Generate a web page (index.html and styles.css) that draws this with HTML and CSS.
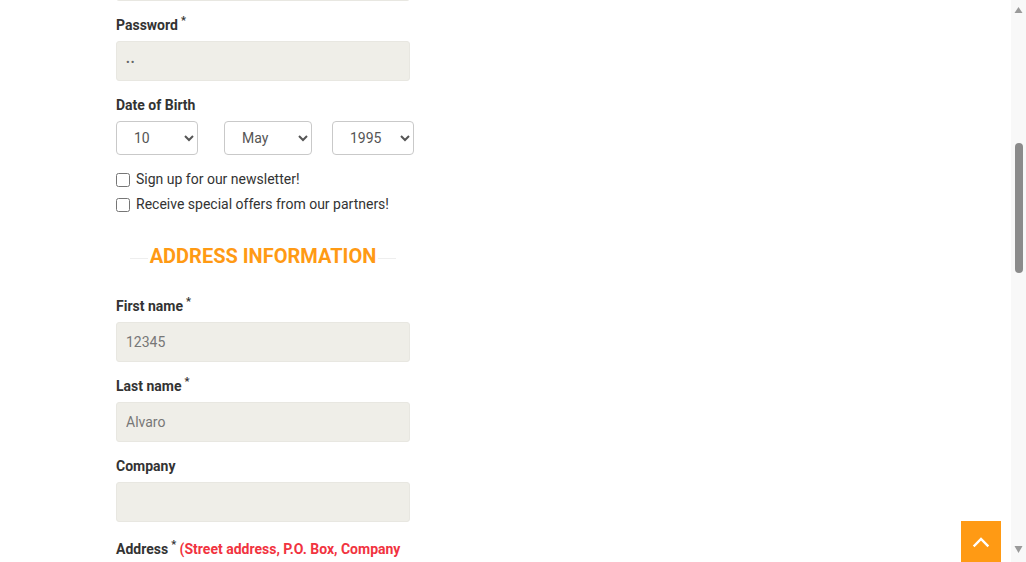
FILE: index.html
```html
<!DOCTYPE html>
<html lang="en">
<head>
<meta charset="utf-8">
<title>Create an account</title>
<link rel="stylesheet" href="styles.css">
</head>
<body>
<main class="page">
  <form class="account-form">
    <h1 class="page-title">Create an account</h1>
    <h2 class="section-title"><span>Your personal information</span></h2>
    <div class="field">
      <label class="field-label">Social title</label>
      <div class="radio-row">
        <label class="radio"><input type="radio" name="gender"> Mr.</label>
        <label class="radio"><input type="radio" name="gender"> Mrs.</label>
      </div>
    </div>
    <div class="field">
      <label class="field-label">First name<sup>*</sup></label>
      <input class="text-input" type="text" value="12345">
    </div>
    <div class="field">
      <label class="field-label">Last name<sup>*</sup></label>
      <input class="text-input" type="text" value="Alvaro">
    </div>
    <div class="field">
      <label class="field-label">Email<sup>*</sup></label>
      <input class="text-input" type="email" value="alvaro@example.com">
    </div>
    <div class="field" id="password-field">
      <label class="field-label">Password<sup>*</sup></label>
      <input class="text-input password" type="password" value="ab">
    </div>
    <div class="field dob-field">
      <label class="field-label">Date of Birth</label>
      <div class="dob-row">
        <select class="dob dob-day"><option>10</option></select>
        <select class="dob dob-month"><option>May</option></select>
        <select class="dob dob-year"><option>1995</option></select>
      </div>
    </div>
    <div class="checks">
      <label class="check"><input type="checkbox"> Sign up for our newsletter!</label>
      <label class="check"><input type="checkbox"> Receive special offers from our partners!</label>
    </div>
    <h2 class="section-title"><span>Address information</span></h2>
    <div class="field">
      <label class="field-label">First name<sup>*</sup></label>
      <input class="text-input" type="text" value="12345">
    </div>
    <div class="field">
      <label class="field-label">Last name<sup>*</sup></label>
      <input class="text-input" type="text" value="Alvaro">
    </div>
    <div class="field">
      <label class="field-label">Company</label>
      <input class="text-input" type="text" value="">
    </div>
    <div class="field field-address">
      <label class="field-label">Address<sup>*</sup> <span class="hint">(Street address, P.O. Box, Company name, etc.)</span></label>
      <input class="text-input" type="text" value="">
    </div>
    <div class="field">
      <label class="field-label">Address (Line 2)</label>
      <input class="text-input" type="text" value="">
    </div>
    <div class="field">
      <label class="field-label">City<sup>*</sup></label>
      <input class="text-input" type="text" value="">
    </div>
    <div class="field">
      <label class="field-label">Zip/Postal Code<sup>*</sup></label>
      <input class="text-input" type="text" value="">
    </div>
    <div class="field">
      <label class="field-label">Country<sup>*</sup></label>
      <input class="text-input" type="text" value="United States">
    </div>
    <div class="field">
      <label class="field-label">Home phone</label>
      <input class="text-input" type="text" value="">
    </div>
    <div class="field">
      <label class="field-label">Mobile phone<sup>*</sup></label>
      <input class="text-input" type="text" value="">
    </div>
    <button class="register" type="button">Register</button>
  </form>
</main>
<a class="back-top" href="#top" aria-label="Back to top">
  <svg width="18" height="18" viewBox="0 0 18 18"><path d="M2.5 12.5 L9 6 L15.5 12.5" fill="none" stroke="#fff" stroke-width="2.4" stroke-linecap="square"/></svg>
</a>
<div class="scrollbar" aria-hidden="true">
  <div class="sb-arrow sb-up"><svg width="15" height="15" viewBox="0 0 15 15"><path d="M3.5 13 L7.5 7 L11.5 13 Z" fill="#9a9a9a"/></svg></div>
  <div class="sb-track"><div class="sb-thumb"></div></div>
  <div class="sb-arrow sb-down"><svg width="15" height="20" viewBox="0 0 15 20"><path d="M3.5 4 L7.5 11 L11.5 4 Z" fill="#9a9a9a"/></svg></div>
</div>
<script src="scroll.js"></script>
</body>
</html>
```

FILE: scroll.js
```js
(function () {
  function place() {
    var f = document.getElementById('password-field');
    var top = f.getBoundingClientRect().top + window.pageYOffset;
    window.scrollTo(0, top - 15);
  }
  place();
  window.addEventListener('load', place);
})();
```

FILE: styles.css
```css
html, body {
  margin: 0;
  padding: 0;
  background: #fff;
}
body {
  font-family: Roboto, "Liberation Sans", Arial, sans-serif;
  font-size: 14px;
  color: #333;
}
.page {
  box-sizing: border-box;
  min-height: 2300px;
  padding: 156px 15px 0 116px;
}
.account-form {
  width: 294px;
}
.page-title {
  margin: 0 0 30px;
  font-size: 24px;
  line-height: 30px;
  font-weight: 700;
  text-transform: uppercase;
  color: #333;
}
.section-title {
  display: flex;
  align-items: center;
  gap: 2px;
  margin: 0 14px 28px;
  font-size: 20px;
  line-height: 24px;
  font-weight: 700;
  color: #ff9a14;
  text-transform: uppercase;
  white-space: nowrap;
}
.section-title::before,
.section-title::after {
  content: "";
  flex: 1;
  height: 1px;
  margin-top: 4px;
  background: #eeeeee;
}
.field {
  margin-bottom: 14px;
}
.field-address {
  padding-top: 3px;
}
.field-label {
  display: block;
  margin-bottom: 6px;
  line-height: 20px;
  font-weight: 700;
  color: #333;
}
.field-label sup {
  font-size: 11px;
  margin-left: 3px;
  vertical-align: 6px;
  line-height: 0;
}
.hint {
  color: #f13340;
}
.text-input {
  box-sizing: border-box;
  display: block;
  width: 294px;
  height: 40px;
  margin: 0;
  padding: 0 9px;
  border: 1px solid #e8e7e1;
  border-radius: 3px;
  background: #efeee8;
  font-family: Roboto, "Liberation Sans", Arial, sans-serif;
  font-size: 14px;
  color: #777;
  outline: none;
}
.text-input.password {
  font-size: 11px;
  letter-spacing: 1px;
  padding-top: 2px;
  color: #666;
}
.radio-row {
  display: flex;
  gap: 20px;
  height: 20px;
  align-items: center;
}
.radio {
  display: flex;
  align-items: center;
  gap: 4px;
}
.radio input { margin: 0; }
.dob-field {
  margin-bottom: 11px;
}
.dob-row {
  display: flex;
}
.dob {
  flex: none;
  box-sizing: border-box;
  height: 34px;
  margin: 0;
  padding: 0 4px 0 13px;
  border: 1px solid #c9c9c9;
  border-radius: 4px;
  background: #fff;
  font-family: Roboto, "Liberation Sans", Arial, sans-serif;
  font-size: 14px;
  color: #555;
}
.dob-day { width: 82px; margin-right: 26px; }
.dob-month { width: 88px; margin-right: 20px; }
.dob-year { width: 82px; }
.checks {
  margin-bottom: 28px;
}
.check {
  display: flex;
  align-items: center;
  gap: 6px;
  height: 25px;
  color: #333;
  white-space: nowrap;
}
.check input {
  width: 14px;
  height: 14px;
  margin: 2px 0 0;
}
.register {
  margin-top: 10px;
  height: 40px;
  padding: 0 24px;
  border: 0;
  border-radius: 3px;
  background: #ff9a14;
  color: #fff;
  font-family: Roboto, "Liberation Sans", Arial, sans-serif;
  font-size: 14px;
  font-weight: 700;
  text-transform: uppercase;
}
.back-top {
  position: fixed;
  right: 25px;
  bottom: 0;
  width: 40px;
  height: 41px;
  display: flex;
  align-items: center;
  justify-content: center;
  background: #ff9a14;
}
.scrollbar {
  position: fixed;
  top: 0;
  right: 0;
  width: 15px;
  height: 100vh;
  display: flex;
  flex-direction: column;
  background: #f8f8f8;
}
.sb-arrow {
  display: flex;
}
.sb-up { height: 15px; }
.sb-down { height: 20px; }
.sb-track {
  flex: 1;
  display: flex;
  flex-direction: column;
  align-items: center;
}
.sb-thumb {
  width: 8px;
  height: 130px;
  margin-top: 128px;
  border-radius: 4px;
  background: #8b8b8b;
}
```
